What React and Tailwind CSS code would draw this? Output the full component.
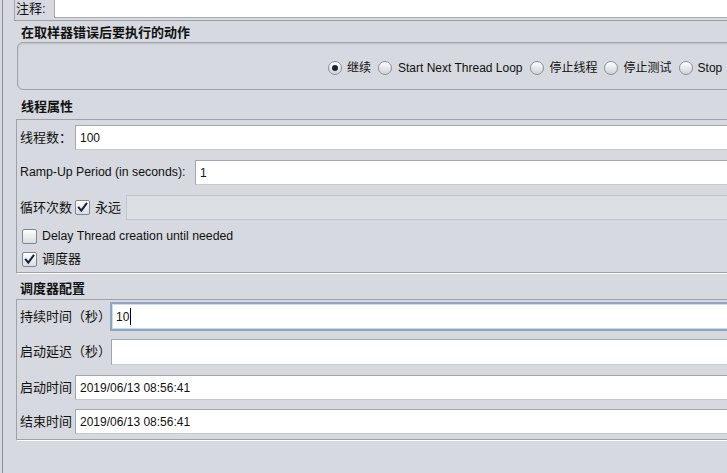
import React from 'react'

const font = "font-['Liberation_Sans','Noto_Sans_CJK_SC',sans-serif]"

function Radio({ checked }) {
  return (
    <span className="relative w-[14px] h-[14px] rounded-full border border-[#8a8f96] bg-gradient-to-b from-white to-[#cfd3d9] flex items-center justify-center shrink-0">
      {checked && <span className="w-[6px] h-[6px] rounded-full bg-[#1f2328]" />}
    </span>
  )
}

function Checkbox({ checked }) {
  return (
    <span className="w-[15px] h-[15px] rounded-[2px] border border-[#80868e] bg-gradient-to-b from-white to-[#d9dce1] flex items-center justify-center shrink-0">
      {checked && (
        <svg width="11" height="11" viewBox="0 0 11 11">
          <path d="M1.8 5.6 L4.3 8.6 L9.4 1.6" fill="none" stroke="#14213d" strokeWidth="2" strokeLinecap="square" />
        </svg>
      )}
    </span>
  )
}

function Field({ value, className = '' }) {
  return (
    <div className={`flex-1 h-full bg-white border border-[#a2a6ad] border-r-0 border-b-[#c6c9ce] flex items-center pl-[4px] text-[12px] text-[#111] ${className}`}>
      {value}
    </div>
  )
}

export default function App() {
  return (
    <div className={`w-[727px] h-[473px] bg-[#d6d9df] overflow-hidden flex text-[#111] ${font}`}>
      <div className="w-[2px] shrink-0" />
      <div className="w-px bg-[#8e9298] shrink-0" />
      <div className="flex-1 pl-[11px] flex flex-col">
        {/* 注释 */}
        <div className="h-[21px] flex border-l border-b border-[#9ea2a8] shrink-0">
          <div className="w-[39px] pl-[1px] h-[18px] leading-[18px] text-[13px]">注释:</div>
          <div className="flex-1 h-[18px] bg-white border-l border-b border-[#a6aab0]" />
        </div>

        {/* 在取样器错误后要执行的动作 */}
        <div className="h-[21px] pt-[3px] pl-[7px] flex items-center font-bold text-[13px] shrink-0">
          在取样器错误后要执行的动作
        </div>
        <div className="ml-[3px] -mr-[10px] h-[48px] rounded-[6px] border border-[#9fa3aa] shadow-[inset_0_1px_2px_rgba(0,0,0,0.12)] flex items-center pt-[4px] pl-[310px] text-[12px] whitespace-nowrap shrink-0">
          <Radio checked />
          <span className="ml-[5px]">继续</span>
          <span className="ml-[7px]"><Radio /></span>
          <span className="ml-[6px]">Start Next Thread Loop</span>
          <span className="ml-[7px]"><Radio /></span>
          <span className="ml-[6px]">停止线程</span>
          <span className="ml-[6px]"><Radio /></span>
          <span className="ml-[6px]">停止测试</span>
          <span className="ml-[7px]"><Radio /></span>
          <span className="ml-[5px]">Stop</span>
        </div>

        {/* 线程属性 */}
        <div className="h-[29px] pt-[4px] pl-[7px] flex items-center font-bold text-[13px] shrink-0">线程属性</div>
        <div className="ml-[2px] -mr-[10px] h-[154px] border border-[#9ea2a8] shadow-[1px_1px_0_#fff] pl-[3px] flex flex-col shrink-0">
          <div className="mt-[5px] h-[25px] flex items-center">
            <span className="w-[55px] text-[13px]">线程数：</span>
            <Field value="100" />
          </div>
          <div className="mt-[10px] h-[25px] flex items-center">
            <span className="w-[175px] text-[12.3px]">Ramp-Up Period (in seconds):</span>
            <Field value="1" />
          </div>
          <div className="mt-[10px] h-[25px] flex items-center">
            <span className="w-[55px] text-[13px]">循环次数</span>
            <Checkbox checked />
            <span className="ml-[5px] w-[31px] text-[13px]">永远</span>
            <div className="flex-1 h-full bg-[#dcdfe4] border border-[#c3c6cb] border-r-0" />
          </div>
          <div className="mt-[8px] h-[16px] pl-[2px] flex items-center">
            <Checkbox />
            <span className="ml-[5px] text-[12.3px]">Delay Thread creation until needed</span>
          </div>
          <div className="mt-[7px] h-[16px] pl-[2px] flex items-center">
            <Checkbox checked />
            <span className="ml-[5px] text-[13px]">调度器</span>
          </div>
        </div>

        {/* 调度器配置 */}
        <div className="h-[26px] pt-[6px] pl-[6px] flex items-center font-bold text-[13px] shrink-0">调度器配置</div>
        <div className="ml-[2px] -mr-[10px] h-[141px] border border-[#9ea2a8] shadow-[1px_1px_0_#fff] pl-[3px] flex flex-col shrink-0">
          <div className="mt-[2px] h-[29px] flex items-center">
            <span className="w-[90px] text-[13px]">持续时间（秒）</span>
            <div className="flex-1 h-full bg-white border border-[#9ea3aa] border-r-0 shadow-[inset_0_0_0_1px_#7aa6d9,inset_0_0_0_2px_#c8dcf2] flex items-center pl-[5px] text-[12px]">
              10<span className="ml-px w-px h-[17px] bg-black" />
            </div>
          </div>
          <div className="mt-[8px] h-[26px] flex items-center">
            <span className="w-[91px] text-[13px]">启动延迟（秒）</span>
            <Field value="" />
          </div>
          <div className="mt-[10px] h-[25px] flex items-center">
            <span className="w-[55px] text-[13px]">启动时间</span>
            <Field value="2019/06/13 08:56:41" />
          </div>
          <div className="mt-[9px] h-[25px] flex items-center">
            <span className="w-[55px] text-[13px]">结束时间</span>
            <Field value="2019/06/13 08:56:41" />
          </div>
        </div>
      </div>
    </div>
  )
}
